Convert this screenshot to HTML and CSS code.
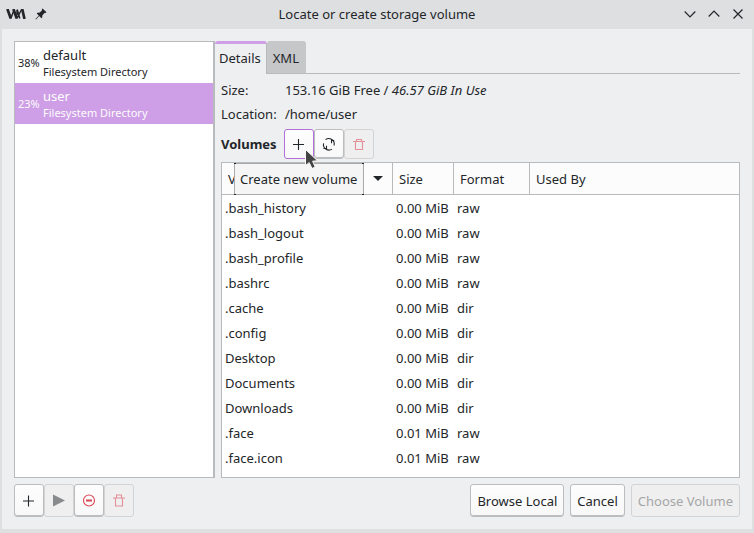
FILE: index.html
```html
<!DOCTYPE html>
<html lang="en">
<head>
<meta charset="utf-8">
<title>Locate or create storage volume</title>
<link rel="stylesheet" href="styles.css">
</head>
<body>
<div class="window">
  <header class="titlebar">
    <div class="title-left">
      <svg width="20" height="10" viewBox="0 0 20 10" fill="none" stroke="#232629"><path d="M1.4 0L4.8 9.5M7.4 0L10.8 9.5M16.2 0L18.5 10" stroke-width="2.7"/><path d="M4.8 9.5L8 1M10.8 9.5L15.6 0.5M11.2 0.5L13.8 9.5M11 1L11 6" stroke-width="1.5"/></svg>
      <svg width="12" height="12" viewBox="0 0 12 12" fill="#232629"><path d="M7.6 0.5L11.5 4.2L10.6 5L9.8 4.8L7.4 7.2L7.2 9.5L6.4 10.2L4.2 8L1 11.4L0.5 11L3.8 7.6L1.7 5.5L2.5 4.7L4.8 4.6L7.1 2.2L6.9 1.3Z"/></svg>
    </div>
    <h1 class="title">Locate or create storage volume</h1>
    <div class="title-right">
      <button class="wm" aria-label="Minimize"><svg width="12" height="12" viewBox="0 0 12 12"><path d="M0.7 3.5L6 8.8L11.3 3.5"/></svg></button>
      <button class="wm" aria-label="Maximize"><svg width="12" height="12" viewBox="0 0 12 12"><path d="M0.7 8.5L6 3.2L11.3 8.5"/></svg></button>
      <button class="wm" aria-label="Close"><svg width="12" height="12" viewBox="0 0 12 12"><path d="M1.5 1.5L10.5 10.5M10.5 1.5L1.5 10.5"/></svg></button>
    </div>
  </header>
  <main class="content">
    <div class="panes">
      <ul class="pools">
        <li class="pool"><span class="percent">38%</span><div><div class="name">default</div><div class="kind">Filesystem Directory</div></div></li>
        <li class="pool selected"><span class="percent">23%</span><div><div class="name">user</div><div class="kind">Filesystem Directory</div></div></li>
      </ul>
      <section class="details">
        <div class="tabs" role="tablist">
          <button class="tab active" role="tab" aria-selected="true">Details</button>
          <button class="tab" role="tab" aria-selected="false">XML</button>
        </div>
        <div class="page">
          <dl class="facts">
            <dt>Size:</dt><dd>153.16 GiB Free / <em>46.57 GiB In Use</em></dd>
            <dt>Location:</dt><dd>/home/user</dd>
          </dl>
          <div class="toolbar">
            <h2 class="heading">Volumes</h2>
            <div class="hovered">
              <button class="btn icon focus" aria-label="Create new volume"><svg width="16" height="16" viewBox="0 0 16 16"><path d="M7.5 3V14M2 8.5H13"/></svg></button>
              <div class="tooltip" role="tooltip">Create new volume</div>
              <svg class="cursor" width="16" height="24" viewBox="0 0 16 24"><path d="M1.5 1.5V17.5L5.2 14.6L8 20.5L11.2 19L8.6 13.2L13.5 12.7Z" fill="#444" stroke="#f7f7f7" stroke-width="1"/></svg>
            </div>
            <button class="btn icon" aria-label="Refresh"><svg width="16" height="16" viewBox="0 0 16 16"><path d="M4.5 3.6A5.5 5.5 0 0 1 13 9.5M11 13.1A5.5 5.5 0 0 1 2.6 7.3M2.5 12.5H5.5V9.8M13.2 4.5H10.5V7.2"/></svg></button>
            <button class="btn icon danger" disabled aria-label="Delete volume"><svg width="16" height="16" viewBox="0 0 16 16"><path d="M2 5.5H14M5.5 5V3.5H10.5V5M4.5 6V13.5H11.5V6"/></svg></button>
          </div>
          <div class="volumes">
            <table>
              <colgroup><col class="c-name"><col class="c-size"><col class="c-format"><col></colgroup>
              <thead><tr><th><div class="sort"><span>Volumes</span><svg width="10" height="5" viewBox="0 0 10 5"><path d="M0 0H10L5 5Z" fill="#232629"/></svg></div></th><th>Size</th><th>Format</th><th>Used By</th></tr></thead>
              <tbody>
                <tr><td>.bash_history</td><td>0.00 MiB</td><td>raw</td><td></td></tr>
                <tr><td>.bash_logout</td><td>0.00 MiB</td><td>raw</td><td></td></tr>
                <tr><td>.bash_profile</td><td>0.00 MiB</td><td>raw</td><td></td></tr>
                <tr><td>.bashrc</td><td>0.00 MiB</td><td>raw</td><td></td></tr>
                <tr><td>.cache</td><td>0.00 MiB</td><td>dir</td><td></td></tr>
                <tr><td>.config</td><td>0.00 MiB</td><td>dir</td><td></td></tr>
                <tr><td>Desktop</td><td>0.00 MiB</td><td>dir</td><td></td></tr>
                <tr><td>Documents</td><td>0.00 MiB</td><td>dir</td><td></td></tr>
                <tr><td>Downloads</td><td>0.00 MiB</td><td>dir</td><td></td></tr>
                <tr><td>.face</td><td>0.01 MiB</td><td>raw</td><td></td></tr>
                <tr><td>.face.icon</td><td>0.01 MiB</td><td>raw</td><td></td></tr>
              </tbody>
            </table>
          </div>
        </div>
      </section>
    </div>
    <footer class="footer">
      <div class="group">
        <button class="btn icon" aria-label="Add pool"><svg width="16" height="16" viewBox="0 0 16 16"><path d="M7.5 2.5V13.5M2 8H13"/></svg></button>
        <button class="btn icon" disabled aria-label="Start pool"><svg width="16" height="16" viewBox="0 0 16 16"><path d="M2 1.5L14 7.5L2 13.5Z" fill="#888a8c" stroke="none"/></svg></button>
        <button class="btn icon danger" aria-label="Stop pool"><svg width="16" height="16" viewBox="0 0 16 16"><circle cx="8" cy="7.5" r="5.5"/><path d="M5 7.5H11" stroke-width="2"/></svg></button>
        <button class="btn icon danger" disabled aria-label="Delete pool"><svg width="16" height="16" viewBox="0 0 16 16"><path d="M2 5H14M5.5 4.5V2H10.5V4.5M4.5 5.5V13H11.5V5.5"/></svg></button>
      </div>
      <div class="group actions">
        <button class="btn">Browse Local</button>
        <button class="btn">Cancel</button>
        <button class="btn wide" disabled>Choose Volume</button>
      </div>
    </footer>
  </main>
</div>
</body>
</html>
```
FILE: styles.css
```css
* { box-sizing: border-box; }
body { margin: 0; font: 13px/18px "Noto Sans", sans-serif; color: #232629; }
button { font: inherit; color: inherit; margin: 0; }
h1, h2, ul, dl, dd { margin: 0; padding: 0; font-size: inherit; }
svg { display: block; }

.window { min-height: 100vh; display: flex; flex-direction: column; background: #dedfe1; padding: 0 2px 4px; }
.titlebar { height: 29px; display: grid; grid-template-columns: 1fr auto 1fr; align-items: center; padding: 0 4px 1px; }
.title { font-weight: 400; }
.title-left { display: flex; align-items: center; gap: 9px; }
.title-right { display: flex; justify-content: flex-end; gap: 12px; padding-right: 4px; }
.wm { border: 0; background: none; padding: 0; }
.wm path { fill: none; stroke: #232629; stroke-width: 1.2; }

.content { flex: 1; display: flex; flex-direction: column; gap: 6px; background: #eeeff1; padding: 12px; }
.panes { flex: 1; display: grid; grid-template-columns: 201px 1fr; }
.pools { list-style: none; background: #fff; border: 1px solid #b9babc; border-right-width: 2px; }
.pool { display: grid; grid-template-columns: 22px 1fr; align-items: center; gap: 3px; height: 41px; padding: 0 3px; }
.percent, .kind { font-size: 11px; line-height: 16px; }
.selected { background: #ce9fe6; color: #fcfcfc; }

.details { display: flex; flex-direction: column; min-width: 0; }
.tabs { display: flex; height: 33px; border-bottom: 1px solid #b9babc; }
.tab { height: 32px; border: 0; border-top: 3px solid #c6c7c9; background: #c6c7c9; padding: 0 7px 1px 6px; border-radius: 3px 3px 0 0; }
.tab.active { height: 33px; border-top-color: #ce9fe6; background: #eeeff1; padding: 0 5px 2px 4px; border-right: 1px solid #b9babc; }
.page { flex: 1; display: flex; flex-direction: column; padding-left: 6px; }
.facts { display: grid; grid-template-columns: 64px 1fr; row-gap: 6px; padding: 7px 0 6px; }
.toolbar { display: flex; align-items: center; height: 30px; margin-bottom: 3px; }
.heading { font-weight: 700; width: 63px; }

.btn { height: 33px; padding: 0 6px; border: 1px solid #bcbdbf; border-radius: 3px; background: linear-gradient(#fdfdfd, #f8f8f8); box-shadow: inset 0 -1px #bcbdbf; }
.btn.icon { width: 30px; display: grid; place-items: center; }
.btn svg { fill: none; stroke: #232629; stroke-width: 1.1; }
.btn:disabled { background: #efefef; border-color: #d3d4d5; color: #a5a6a8; box-shadow: none; }
.btn.danger svg { stroke: #da4453; }
.btn.danger:disabled svg { opacity: .55; }
.toolbar .btn { height: 30px; }
.btn.focus { border-color: #b26fd8; box-shadow: none; }

.hovered { position: relative; }
.tooltip { position: absolute; z-index: 1; left: -50px; top: 34px; border: 1px solid #a9aaac; background: #f5f5f6; padding: 6px 6px 6px 5px; line-height: 18px; width: max-content; }
.tooltip::before { content: ""; position: absolute; inset: -1px; background: conic-gradient(#232629 0 0) 0 0 / 2px 1px, conic-gradient(#232629 0 0) 100% 0 / 2px 1px, conic-gradient(#232629 0 0) 0 100% / 2px 1px, conic-gradient(#232629 0 0) 100% 100% / 2px 1px; background-repeat: no-repeat; }
.cursor { position: absolute; z-index: 2; left: 20px; top: 19px; }

.volumes { flex: 1; border: 1px solid #b9babc; background: #fff; }
table { width: 100%; table-layout: fixed; border-collapse: separate; border-spacing: 0; }
.c-name { width: 170px; }
.c-size { width: 61px; }
.c-format { width: 76px; }
th { height: 32px; padding: 0 6px; text-align: left; font-weight: 400; background: #fcfcfc; border-bottom: 1px solid #b9babc; }
th + th { border-left: 1px solid #b9babc; }
.sort { display: flex; align-items: center; justify-content: space-between; padding-right: 3px; }
td { height: 25px; padding: 0 3px; white-space: nowrap; }
td:nth-child(2), td:nth-child(3) { padding-left: 4px; }

.footer { display: flex; justify-content: space-between; }
.group { display: flex; }
.actions { gap: 6px; }
```
